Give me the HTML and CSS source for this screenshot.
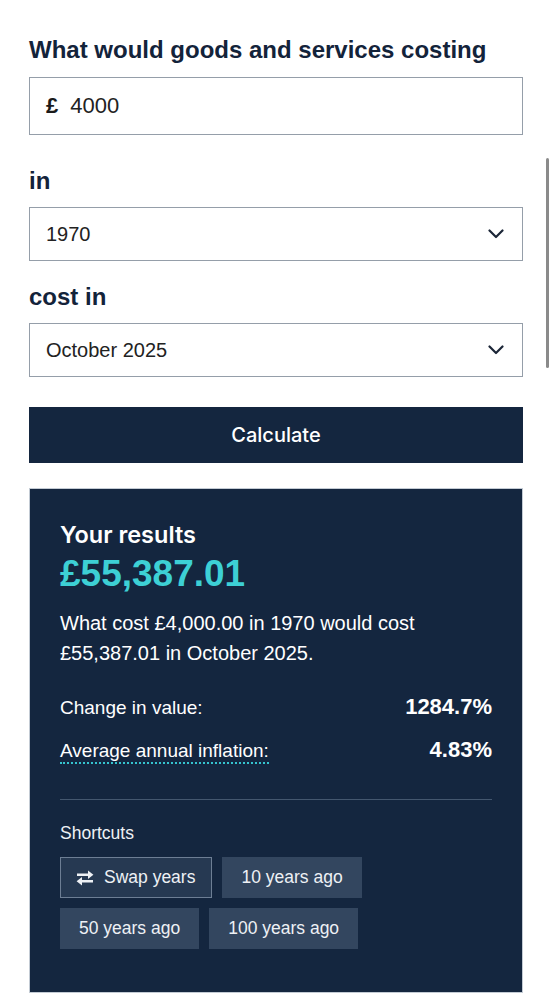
FILE: index.html
```html
<!DOCTYPE html>
<html lang="en">
<head>
<meta charset="utf-8">
<title>Inflation calculator</title>
<link rel="stylesheet" href="styles.css">
</head>
<body>
<main class="calc">
  <div class="form">
    <div class="label heading">What would goods and services costing</div>
    <div class="field input-field">
      <span class="currency">£</span>
      <span class="field-value">4000</span>
    </div>

    <div class="label label-first">in</div>
    <div class="field select-field">
      <span class="field-value">1970</span>
      <svg class="chevron" viewBox="0 0 16 10" aria-hidden="true"><path d="M1.5 1.5 L8 8 L14.5 1.5"/></svg>
    </div>

    <div class="label label-next">cost in</div>
    <div class="field select-field">
      <span class="field-value">October 2025</span>
      <svg class="chevron" viewBox="0 0 16 10" aria-hidden="true"><path d="M1.5 1.5 L8 8 L14.5 1.5"/></svg>
    </div>

    <button class="calculate" type="button">Calculate</button>
  </div>

  <section class="results">
    <h2 class="results-title">Your results</h2>
    <div class="results-amount">£55,387.01</div>
    <p class="results-text">What cost £4,000.00 in 1970 would cost £55,387.01 in October 2025.</p>

    <div class="stats">
      <div class="stat-row">
        <span class="stat-label">Change in value:</span>
        <span class="stat-value">1284.7%</span>
      </div>
      <div class="stat-row">
        <span class="stat-label"><span class="term">Average annual inflation:</span></span>
        <span class="stat-value">4.83%</span>
      </div>
    </div>

    <hr class="divider">

    <div class="shortcuts-title">Shortcuts</div>
    <div class="shortcuts">
      <button class="chip chip-swap" type="button">
        <svg class="swap-icon" viewBox="0 0 18 16" aria-hidden="true"><path d="M1 3.6H12V0.6L17.4 4.8L12 9V6H1Z M17 10H6V7L0.6 11.2L6 15.4V12.4H17Z"/></svg>
        <span>Swap years</span>
      </button>
      <button class="chip" type="button">10 years ago</button>
      <button class="chip" type="button">50 years ago</button>
      <button class="chip" type="button">100 years ago</button>
    </div>
  </section>
</main>
<div class="scrollbar" aria-hidden="true"></div>
</body>
</html>
```

FILE: styles.css
```css
* { box-sizing: border-box; }

html, body {
  margin: 0;
  background: #ffffff;
}

body {
  font-family: "Liberation Sans", Arial, sans-serif;
  color: #13233a;
}

.calc {
  width: 494px;
  margin-left: 29px;
  padding-top: 35px;
}

.label {
  font-size: 24px;
  font-weight: 700;
  line-height: 30px;
  color: #13233a;
}

.heading { margin-bottom: 12px; }
.label-first { margin-top: 31px; margin-bottom: 11px; }
.label-next { margin-top: 21px; margin-bottom: 11px; }

.field {
  display: flex;
  align-items: center;
  border: 1px solid #959ea9;
  background: #ffffff;
  padding: 0 18px 0 16px;
  color: #222222;
}

.input-field {
  height: 58px;
  font-size: 22px;
}

.currency {
  font-weight: 700;
  margin-right: 12px;
  color: #1a1a1a;
}

.select-field {
  height: 54px;
  font-size: 20px;
  justify-content: space-between;
}

.chevron {
  width: 16px;
  height: 10px;
  fill: none;
  stroke: #1b2637;
  stroke-width: 2.2;
  stroke-linecap: round;
  stroke-linejoin: round;
}

.calculate {
  display: block;
  width: 100%;
  height: 56px;
  margin-top: 30px;
  border: none;
  background: #14263f;
  color: #ffffff;
  font-family: Inter, "Liberation Sans", sans-serif;
  font-weight: 500;
  font-size: 20px;
}

.results {
  margin-top: 25px;
  background: #14263f;
  border: 1px solid #c3cbd4;
  padding: 31px 30px 43px;
  color: #ffffff;
}

.results-title {
  margin: 0;
  font-family: Inter, "Liberation Sans", sans-serif;
  font-weight: 600;
  font-size: 23.5px;
  line-height: 30px;
}

.results-amount {
  margin-top: 4px;
  font-size: 37px;
  font-weight: 700;
  line-height: 40px;
  color: #3dd0d5;
}

.results-text {
  margin: 14px 0 0;
  font-size: 20px;
  line-height: 30px;
}

.stats {
  margin-top: 24px;
  display: flex;
  flex-direction: column;
  gap: 12px;
}

.stat-row {
  display: flex;
  justify-content: space-between;
  align-items: baseline;
}

.stat-label {
  font-size: 19px;
  line-height: 30px;
}

.stat-value {
  font-size: 22px;
  font-weight: 700;
  line-height: 30px;
}

.term {
  border-bottom: 2px dotted #35c4cf;
  padding-bottom: 1px;
}

.divider {
  margin: 33px 0 0;
  border: 0;
  border-top: 1px solid #44576f;
}

.shortcuts-title {
  margin-top: 21px;
  font-size: 17.5px;
  line-height: 24px;
  color: #eef1f5;
}

.shortcuts {
  margin-top: 12px;
  display: flex;
  flex-wrap: wrap;
  gap: 10px;
}

.chip {
  display: inline-flex;
  align-items: center;
  height: 41px;
  padding: 0 18px;
  border: 1px solid transparent;
  background: #33465f;
  color: #eef1f5;
  font-family: "Liberation Sans", Arial, sans-serif;
  font-size: 17.5px;
}

.chip-swap {
  background: #263952;
  border-color: #6d7e94;
  padding: 0 16px 0 15px;
  gap: 10px;
}

.swap-icon {
  width: 18px;
  height: 16px;
  fill: #eef1f5;
}

.scrollbar {
  position: fixed;
  left: 546px;
  top: 158px;
  width: 3px;
  height: 210px;
  border-radius: 2px;
  background: #8a8a8a;
}
```
